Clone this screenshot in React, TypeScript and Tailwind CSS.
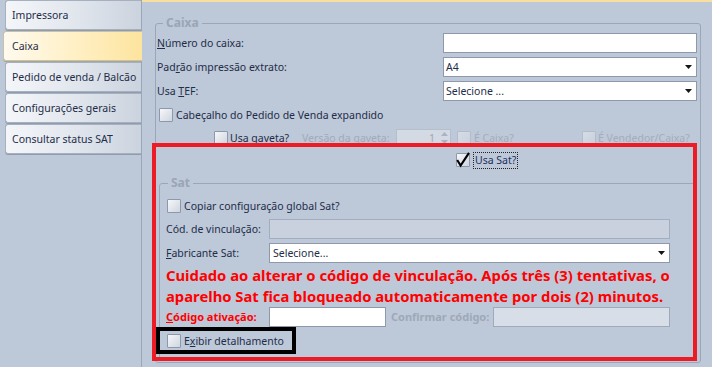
import React from "react";

function Box({ checked = false, disabled = false }: { checked?: boolean; disabled?: boolean }) {
  return (
    <span
      className={
        disabled
          ? "relative block h-[14px] w-[14px] shrink-0 rounded-[1px] border border-[#b3bdca] bg-gradient-to-br from-[#d5dce6] to-[#c8d1dd]"
          : "relative block h-[14px] w-[14px] shrink-0 rounded-[1px] border border-[#8d98ab] bg-gradient-to-br from-[#f6f7f9] to-[#cfd6e0]"
      }
    >
      {checked && (
        <svg className="absolute left-[-1px] top-[-1px] overflow-visible" width="14" height="14" viewBox="0 0 14 14">
          <path d="M1.2 7 L4.6 12.6 L13 -0.2" fill="none" stroke="#000" strokeWidth="2.1" strokeLinejoin="miter" />
        </svg>
      )}
    </span>
  );
}

function Arrow() {
  return (
    <svg width="7" height="4" viewBox="0 0 7 4" className="shrink-0">
      <path d="M0 0H7L3.5 4Z" fill="#151515" />
    </svg>
  );
}

function Tab({ label, selected = false }: { label: string; selected?: boolean }) {
  return selected ? (
    <div className="relative z-10 -ml-[2px] -mr-[1px] flex h-[30px] items-center rounded-l-[3px] border border-r-0 border-[#c8c3a8] bg-gradient-to-r from-[#fffaee] via-[#fff0c6] to-[#fde49e] pl-[8px] shadow-[0_1px_0_#a9a88f]">
      {label}
    </div>
  ) : (
    <div className="flex h-[30px] items-center rounded-l-[3px] border border-r-0 border-[#a6b0bf] bg-gradient-to-r from-[#f4f6f9] via-[#e2e7ee] to-[#cbd3de] pl-[6px] shadow-[0_1px_0_#8f9cb0]">
      {label}
    </div>
  );
}

export default function App() {
  return (
    <div className="relative flex h-[367px] w-[712px] overflow-hidden bg-[#bdc8d8] font-['Noto_Sans',sans-serif] text-[10.5px] leading-[14px] text-[#1e2d48]">
      {/* Sidebar */}
      <aside className="flex w-[142px] shrink-0 flex-col gap-[1px] border-r border-[#9aa7ba] pl-[5px]">
        <Tab label="Impressora" />
        <Tab label="Caixa" selected />
        <Tab label="Pedido de venda / Balcão" />
        <Tab label="Configurações gerais" />
        <Tab label="Consultar status SAT" />
      </aside>

      {/* Content */}
      <main className="flex-1 border-t-2 border-[#f8dfa0] pl-[13px] pr-[11px] pt-[21px]">
        <div className="relative h-[340px] rounded-[3px] border border-[#9ba7b9] pl-[1px] pr-[3px] pt-[9px]">
          <span className="absolute left-[7px] top-[-10px] bg-[#bdc8d8] px-[3px] text-[12px] font-bold leading-[18px] text-[#9aa5b6]">
            Caixa
          </span>
          <div className="flex flex-col gap-[4px]">
            <div className="flex h-[20px] items-center">
              <span className="flex-1">
                <span className="underline">N</span>úmero do caixa:
              </span>
              <div className="h-[20px] w-[254px] border border-[#8e99ab] bg-white" />
            </div>
            <div className="flex h-[20px] items-center">
              <span className="flex-1">
                Pad<span className="underline">r</span>ão impressão extrato:
              </span>
              <div className="flex h-[20px] w-[254px] items-center justify-between border border-[#8e99ab] bg-white pl-[2px] pr-[4px]">
                <span>A4</span>
                <Arrow />
              </div>
            </div>
            <div className="flex h-[20px] items-center">
              <span className="flex-1">
                Usa <span className="underline">T</span>EF:
              </span>
              <div className="flex h-[20px] w-[254px] items-center justify-between border border-[#8e99ab] bg-white pl-[2px] pr-[4px]">
                <span>Selecione ...</span>
                <Arrow />
              </div>
            </div>
            <div className="flex h-[20px] items-center pl-[2px]">
              <Box />
              <span className="ml-[3px]">Cabeçalho do Pedido de Venda expandido</span>
            </div>
            <div className="-mt-[1px] flex h-[20px] items-center pl-[57px]">
              <Box />
              <span className="ml-[2px] w-[72px]">
                Usa <span className="underline">g</span>aveta?
              </span>
              <span className="w-[94px] text-[#a0aaba]">Versão da gaveta:</span>
              <div className="flex h-[18px] w-[55px] items-center justify-end border border-[#b4bfcd] bg-[#d3dae4] text-[#9ea8b6]">
                <span className="mr-[4px]">1</span>
                <div className="flex h-full w-[11px] flex-col items-center justify-center gap-[4px]">
                  <svg width="7" height="4" viewBox="0 0 7 4">
                    <path d="M0 4H7L3.5 0Z" fill="#aab3c1" />
                  </svg>
                  <svg width="7" height="4" viewBox="0 0 7 4">
                    <path d="M0 0H7L3.5 4Z" fill="#aab3c1" />
                  </svg>
                </div>
              </div>
              <span className="ml-[6px]">
                <Box disabled />
              </span>
              <span className="ml-[3px] w-[108px] text-[#a3adbb]">É Caixa?</span>
              <Box disabled />
              <span className="ml-[2px] text-[#a3adbb]">É Vendedor/Caixa?</span>
            </div>
            <div className="-mt-[2px] flex h-[20px] items-center pl-[299px]">
              <Box checked />
              <span className="ml-[3px] flex h-[17px] items-center border border-dotted border-[#222] px-[1px] text-[#1e3060]">
                Usa Sat?
              </span>
            </div>

            {/* Sat group */}
            <div className="relative ml-[2px] mt-[9px] h-[177px] rounded-[3px] border border-[#9ba7b9] pl-[6px] pt-[12px]">
              <span className="absolute left-[8px] top-[-10px] bg-[#bdc8d8] px-[3px] text-[12px] font-bold leading-[18px] text-[#9aa5b6]">
                Sat
              </span>
              <div className="flex flex-col">
                <div className="flex h-[20px] items-center pl-[1px]">
                  <Box />
                  <span className="ml-[3px]">Copiar configuração global Sat?</span>
                </div>
                <div className="mt-[3px] flex h-[20px] items-center">
                  <span className="w-[103px]">Cód. de vinculação:</span>
                  <div className="h-[20px] w-[401px] border border-[#a2adbd] bg-[#c8d1dd]" />
                </div>
                <div className="mt-[4px] flex h-[20px] items-center">
                  <span className="w-[103px]">
                    <span className="underline">F</span>abricante Sat:
                  </span>
                  <div className="flex h-[20px] w-[401px] items-center justify-between border border-[#8e99ab] bg-white pl-[3px] pr-[4px]">
                    <span>Selecione...</span>
                    <Arrow />
                  </div>
                </div>
                <div className="mt-[2px] whitespace-nowrap text-[14.8px] font-bold leading-[21px] text-[#ff0000]">
                  <div>Cuidado ao alterar o código de vinculação. Após três (3) tentativas, o</div>
                  <div>aparelho Sat fica bloqueado automaticamente por dois (2) minutos.</div>
                </div>
                <div className="flex h-[20px] items-center">
                  <span className="w-[103px] text-[11px] font-bold text-[#ff0000]">
                    <span className="underline">C</span>ódigo ativação:
                  </span>
                  <div className="h-[20px] w-[117px] border border-[#8e99ab] bg-white" />
                  <span className="ml-[5px] w-[102px] text-[11px] font-bold text-[#9ea8b7]">Confirmar código:</span>
                  <div className="h-[20px] w-[177px] border border-[#9fa9b9] bg-[#d8dee7]" />
                </div>
                <div className="mt-[4px] flex h-[20px] items-center pl-[1px]">
                  <Box />
                  <span className="ml-[3px]">
                    E<span className="underline">x</span>ibir detalhamento
                  </span>
                </div>
              </div>
            </div>
          </div>
        </div>
      </main>

      {/* Annotation overlays */}
      <div className="pointer-events-none absolute left-[152px] top-[143px] h-[218px] w-[545px] border-4 border-[#ed1c24]" />
      <div className="pointer-events-none absolute left-[156px] top-[327px] h-[27px] w-[140px] border-4 border-black" />
    </div>
  );
}
